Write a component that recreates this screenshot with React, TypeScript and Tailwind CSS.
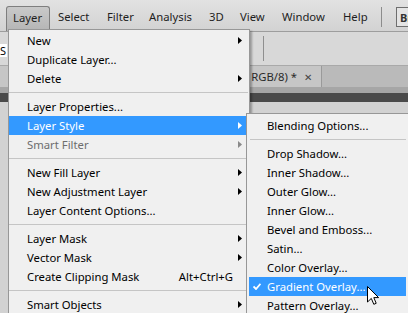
import React from "react";

type Item =
  | { kind: "sep" }
  | {
      kind: "item";
      label: string;
      sub?: boolean;
      shortcut?: string;
      disabled?: boolean;
      active?: boolean;
      checked?: boolean;
    };

const layerMenu: Item[] = [
  { kind: "item", label: "New", sub: true },
  { kind: "item", label: "Duplicate Layer..." },
  { kind: "item", label: "Delete", sub: true },
  { kind: "sep" },
  { kind: "item", label: "Layer Properties..." },
  { kind: "item", label: "Layer Style", sub: true, active: true },
  { kind: "item", label: "Smart Filter", sub: true, disabled: true },
  { kind: "sep" },
  { kind: "item", label: "New Fill Layer", sub: true },
  { kind: "item", label: "New Adjustment Layer", sub: true },
  { kind: "item", label: "Layer Content Options..." },
  { kind: "sep" },
  { kind: "item", label: "Layer Mask", sub: true },
  { kind: "item", label: "Vector Mask", sub: true },
  { kind: "item", label: "Create Clipping Mask", shortcut: "Alt+Ctrl+G" },
  { kind: "sep" },
  { kind: "item", label: "Smart Objects", sub: true },
];

const styleMenu: Item[] = [
  { kind: "item", label: "Blending Options..." },
  { kind: "sep" },
  { kind: "item", label: "Drop Shadow..." },
  { kind: "item", label: "Inner Shadow..." },
  { kind: "item", label: "Outer Glow..." },
  { kind: "item", label: "Inner Glow..." },
  { kind: "item", label: "Bevel and Emboss..." },
  { kind: "item", label: "Satin..." },
  { kind: "item", label: "Color Overlay..." },
  { kind: "item", label: "Gradient Overlay...", active: true, checked: true },
  { kind: "item", label: "Pattern Overlay..." },
];

// menu bar entries after "Layer", with the width each one takes
const barItems: [string, string][] = [
  ["Select", "w-[49px]"],
  ["Filter", "w-[42px]"],
  ["Analysis", "w-[60px]"],
  ["3D", "w-[31px]"],
  ["View", "w-[42px]"],
  ["Window", "w-[61px]"],
  ["Help", "w-[38px]"],
];

function Arrow({ color }: { color: string }) {
  return (
    <svg width="4" height="7" viewBox="0 0 4 7" className="shrink-0">
      <path d="M0 0 L4 3.5 L0 7 Z" fill={color} />
    </svg>
  );
}

function Check() {
  return (
    <svg width="8" height="7" viewBox="0 0 8 7" className="absolute left-[4px] top-[6px]">
      <path d="M0.5 3.5 L3 6 L7.5 0.8" stroke="#fff" strokeWidth="1.8" fill="none" />
    </svg>
  );
}

function MainMenu() {
  return (
    <div className="absolute left-[8px] top-[29px] w-[242px] border border-[#979797] bg-[#f0f0f0] pt-[1px] shadow-[2px_2px_2px_rgba(0,0,0,0.3)]">
      {layerMenu.map((it, i) =>
        it.kind === "sep" ? (
          <div key={i} className="flex h-[9px] items-center">
            <div className="mr-[1px] h-px w-full bg-[#c5c5c5]" />
          </div>
        ) : (
          <div
            key={i}
            className={`mr-[3px] flex h-[19px] items-center pl-[18px] pr-[4px] ${
              it.active ? "bg-[#3399ff] text-white" : it.disabled ? "text-[#6d6d6d]" : "text-black"
            }`}
          >
            <span className="flex-1">{it.label}</span>
            {it.shortcut && <span className="mr-[9px]">{it.shortcut}</span>}
            {it.sub && <Arrow color={it.active ? "#fff" : it.disabled ? "#8a8a8a" : "#000"} />}
          </div>
        )
      )}
    </div>
  );
}

function StyleMenu() {
  return (
    <div className="absolute left-[246px] top-[113px] w-[162px] border border-r-0 border-[#979797] bg-[#f0f0f0] pt-[2px]">
      {styleMenu.map((it, i) =>
        it.kind === "sep" ? (
          <div key={i} className="flex h-[9px] items-center pl-[3px] pr-[2px]">
            <div className="h-px w-full bg-[#c5c5c5]" />
          </div>
        ) : (
          <div
            key={i}
            className={`relative ml-[2px] mr-[2px] flex h-[19px] items-center pl-[18px] ${
              it.active ? "bg-[#3399ff] text-white" : "text-black"
            }`}
          >
            {it.checked && <Check />}
            <span>{it.label}</span>
          </div>
        )
      )}
    </div>
  );
}

function Cursor() {
  return (
    <svg width="13" height="20" viewBox="0 0 13 20" className="absolute left-[367px] top-[286px]">
      <path
        d="M0.5 0.5 L0.5 16 L4.3 12.4 L6.8 18.3 L9.2 17.3 L6.8 11.6 L11.6 11.6 Z"
        fill="#fff"
        stroke="#000"
        strokeWidth="1"
      />
    </svg>
  );
}

export default function App() {
  return (
    <div
      className="relative h-[313px] w-[408px] overflow-hidden bg-[#d4d4d4] text-[11.3px] leading-none"
      style={{ fontFamily: '"Noto Sans", "Open Sans", sans-serif' }}
    >
      {/* application bar */}
      <div className="flex h-[32px] items-start overflow-hidden border-b border-[#9d9d9d] bg-gradient-to-b from-[#e2e2e2] to-[#d2d2d2] pl-[6px]">
        <div className="mt-[6px] flex h-[26px] w-[44px] shrink-0 items-start rounded-t-[3px] border border-b-0 border-[#7e7e7e] bg-gradient-to-b from-[#c9c9c9] to-[#b4b4b4] pl-[6px] pt-[5px] text-[#1e1e1e]">
          Layer
        </div>
        <div className="ml-[8px] mt-[11px] flex shrink-0 text-[#1e1e1e]">
          {barItems.map(([label, w]) => (
            <span key={label} className={w}>
              {label}
            </span>
          ))}
        </div>
        <div className="mt-[7px] h-[20px] w-px shrink-0 bg-[#8c8c8c]" />
        <div className="ml-[14px] mt-[7px] h-[20px] w-[22px] shrink-0 border border-[#6e6e6e] bg-[#e4e4e4] pl-[3px] pt-[4px] text-[11px] font-bold text-[#333]">
          Br
        </div>
      </div>

      {/* options bar */}
      <div className="relative h-[34px] border-b border-[#a9a9a9] bg-[#d8d8d8]">
        <div className="absolute left-0 top-[12px] h-[13px] w-[7px] overflow-hidden bg-white pt-[1px] text-[11px]">
          S
        </div>
        <div className="absolute left-[263px] top-[4px] h-[25px] w-px bg-[#8f8f8f]" />
      </div>

      {/* document tab row */}
      <div className="flex h-[21px] bg-[#bababa]">
        <div className="flex h-full w-[322px] items-center justify-end gap-[7px] border-r border-[#9a9a9a] bg-[#c6c6c6] pr-[9px] text-[#2a2a2a]">
          <span>RGB/8) *</span>
          <span className="text-[10px] text-[#444]">✕</span>
        </div>
      </div>
      <div className="h-[6px] bg-[#a6a6a6]" />
      <div className="h-[9px] bg-[#4a4a4a]" />
      <div className="h-[211px] bg-[#d2d2d2]" />

      <MainMenu />
      <StyleMenu />
      <Cursor />
    </div>
  );
}
